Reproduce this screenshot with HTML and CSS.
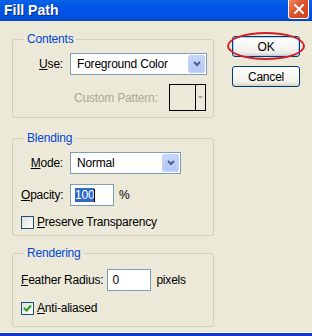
FILE: index.html
```html
<!DOCTYPE html>
<html lang="en">
<head>
  <meta charset="UTF-8">
  <title>Fill Path</title>
  <link rel="stylesheet" href="styles.css">
</head>
<body>

  <div class="window">
    <div class="titlebar">
      <span class="title">Fill Path</span>
      <span class="close">
        <svg width="10" height="10" viewBox="0 0 10 10"><path d="M1 1 L9 9 M9 1 L1 9" stroke="#fff" stroke-width="2" stroke-linecap="square"/></svg>
      </span>
    </div>

    <div class="client">
      <div class="groups">

        <fieldset class="group contents">
          <legend>Contents</legend>
          <div class="row use-row">
            <label class="lbl lbl-right"><u>U</u>se:</label>
            <div class="select select-use">
              <span>Foreground Color</span>
              <span class="drop"><svg width="8" height="6" viewBox="0 0 8 6"><path d="M1 1 L4 4 L7 1" fill="none" stroke="#4d6185" stroke-width="2"/></svg></span>
            </div>
          </div>
          <div class="row pattern-row">
            <span class="disabled">Custom Pattern:</span>
            <div class="swatch">
              <span class="swatch-fill"></span>
              <span class="swatch-arrow">
                <svg width="5" height="3" viewBox="0 0 5 3"><path d="M0 0 L5 0 L2.5 3 Z" fill="#aca899"/></svg>
              </span>
            </div>
          </div>
        </fieldset>

        <fieldset class="group blending">
          <legend>Blending</legend>
          <div class="row mode-row">
            <label class="lbl lbl-right"><u>M</u>ode:</label>
            <div class="select select-mode">
              <span>Normal</span>
              <span class="drop"><svg width="8" height="6" viewBox="0 0 8 6"><path d="M1 1 L4 4 L7 1" fill="none" stroke="#4d6185" stroke-width="2"/></svg></span>
            </div>
          </div>
          <div class="row opacity-row">
            <label class="lbl lbl-left"><u>O</u>pacity:</label>
            <div class="field"><span class="selected">100</span><span class="caret"></span></div>
            <span class="unit">%</span>
          </div>
          <div class="row check-row">
            <span class="check"></span>
            <span><u>P</u>reserve Transparency</span>
          </div>
        </fieldset>

        <fieldset class="group rendering">
          <legend>Rendering</legend>
          <div class="row feather-row">
            <label class="lbl-feather"><u>F</u>eather Radius:</label>
            <div class="field">0</div>
            <span class="unit">pixels</span>
          </div>
          <div class="row check-row anti-row">
            <span class="check checked">
              <svg width="9" height="9" viewBox="0 0 9 9"><path d="M1 4 L3.5 6.5 L8 1.5" fill="none" stroke="#21a121" stroke-width="2"/></svg>
            </span>
            <span><u>A</u>nti-aliased</span>
          </div>
        </fieldset>

      </div>

      <div class="buttons">
        <div class="ok-wrap">
          <button class="btn btn-default">OK</button>
          <span class="ring"></span>
        </div>
        <button class="btn">Cancel</button>
      </div>
    </div>
  </div>

</body>
</html>
```

FILE: styles.css
```css
body { margin: 0; background: #ece9d8; font-family: "Liberation Sans", Arial, sans-serif; font-size: 12px; letter-spacing: -0.2px; color: #000; }
.window { width: 312px; height: 336px; display: flex; flex-direction: column; overflow: hidden; background: #ece9d8; }

.titlebar { height: 21px; flex: none; display: flex; align-items: flex-start; justify-content: space-between; padding: 0 3px 0 4px; background: linear-gradient(to bottom, #0a62ea, #0055e5 35%, #0052e0 80%, #0444bd); }
.title { margin-top: 2px; color: #fff; font-weight: bold; font-size: 14px; letter-spacing: 0; text-shadow: 1px 1px #0a2a8a; }
.close { width: 19px; height: 18px; display: flex; align-items: center; justify-content: center; border: 1px solid #fff; border-top: none; border-radius: 0 0 3px 3px; background: linear-gradient(135deg, #ee8a63, #e0532c 45%, #c8401b); }

.client { flex: 1; display: flex; padding: 11px 0 0 12px; border-bottom: 3px solid #0b3ad3; box-shadow: inset 0 -1px #fff; }
.groups { width: 202px; display: flex; flex-direction: column; }

.group { margin: 0; padding: 0 0 6px; border: 1px solid #d0d0bf; border-radius: 3px; min-width: 0; }
.group legend { margin-left: 11px; padding: 0 3px; height: 14px; line-height: 14px; color: #0046d5; }
.blending { margin-top: 13px; }
.rendering { margin-top: 10px; padding-bottom: 11px; }

.row { display: flex; align-items: center; }
.lbl { flex: none; }
.lbl-right { width: 50px; text-align: right; margin-right: 7px; }
.lbl-left { width: 49px; padding-left: 8px; }
.lbl-feather { padding-left: 8px; margin-right: 4px; white-space: nowrap; }

.use-row { margin-top: 7px; }
.pattern-row { margin-top: 9px; padding-left: 61px; }
.mode-row { margin-top: 7px; }
.opacity-row { margin-top: 10px; }
.check-row { margin-top: 9px; padding-left: 8px; }
.feather-row { margin-top: 9px; }
.anti-row { margin-top: 10px; }

.select { height: 22px; box-sizing: border-box; display: flex; align-items: center; padding-left: 6px; border: 1px solid #7f9db9; background: #fff; }
.select-use { width: 137px; }
.select-mode { width: 111px; }
.drop { margin-left: auto; margin-right: 1px; width: 15px; height: 16px; display: flex; align-items: center; justify-content: center; border: 1px solid #c3d3fd; border-radius: 2px; background: linear-gradient(to bottom, #c6d6fb, #b3c8f5); }

.disabled { color: #aca899; }
.swatch { margin-left: auto; margin-right: 7px; width: 37px; height: 27px; box-sizing: border-box; display: flex; border: 1px solid #000; }
.swatch-fill { width: 25px; border-right: 1px solid #000; }
.swatch-arrow { flex: 1; display: flex; align-items: center; justify-content: center; }

.field { width: 44px; height: 22px; box-sizing: border-box; display: flex; align-items: center; padding-left: 4px; border: 1px solid #7f9db9; background: #fff; }
.selected { background: #316ac5; color: #fff; }
.caret { width: 1px; height: 13px; background: #000; }
.unit { margin-left: 5px; }

.check { width: 13px; height: 13px; box-sizing: border-box; margin-right: 3px; display: flex; align-items: center; justify-content: center; border: 1px solid #1c5180; background: linear-gradient(135deg, #dcdcd7, #fff); }

.buttons { margin-left: 18px; padding-top: 4px; display: flex; flex-direction: column; }
.ok-wrap { position: relative; }
.btn { width: 68px; height: 21px; margin: 0; padding: 0; font-family: inherit; font-size: 12px; letter-spacing: -0.2px; color: #000; border: 1px solid #003c74; border-radius: 3px; background: linear-gradient(to bottom, #fff, #f0efea 80%, #d6d0c5); }
.btn-default { box-shadow: inset 0 0 0 1px #b5cdf5; }
.ok-wrap + .btn { margin-top: 9px; }
.ring { position: absolute; left: -5px; top: -4px; right: -5px; bottom: -3px; border: 2px solid #d3232a; border-radius: 50%; pointer-events: none; }
```
